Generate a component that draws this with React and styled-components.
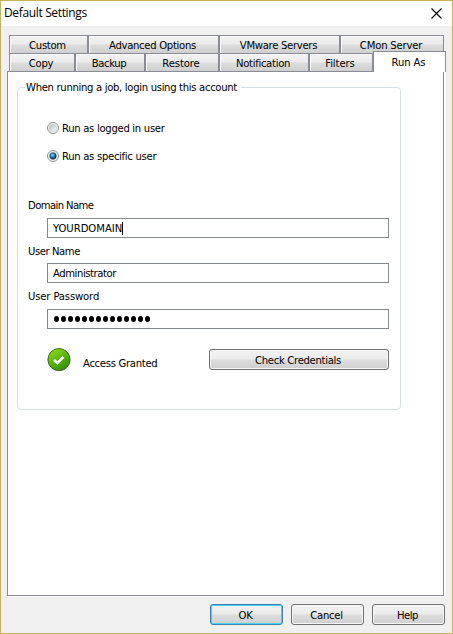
import React, { useState } from 'react';
import styled, { createGlobalStyle, css } from 'styled-components';

const GlobalStyle = createGlobalStyle`
  * {
    box-sizing: border-box;
  }

  body {
    margin: 0;
    overflow: hidden;
  }
`;

const Window = styled.div`
  display: flex;
  flex-direction: column;
  width: 453px;
  height: 634px;
  border: 1px solid #c6b15a;
  background-color: #f0f0f0;
  color: #000000;
  font-family: 'DejaVu Sans Condensed', 'DejaVu Sans', sans-serif;
  font-stretch: condensed;
  font-size: 11.2px;
  line-height: 16px;
  white-space: nowrap;
`;

const TitleBar = styled.header`
  display: flex;
  justify-content: space-between;
  height: 25px;
  padding: 4px 10px 0 3px;
  background-color: #ffffff;
  font-family: 'Open Sans', sans-serif;
  font-stretch: normal;
  font-size: 12px;
  letter-spacing: -0.35px;
`;

const CloseIcon = styled.svg`
  width: 11px;
  height: 11px;
  margin-top: 3px;
`;

const Text = styled.span`
  display: inline-block;
  height: 16px;
  line-height: 18px;
  vertical-align: top;
  letter-spacing: ${(props) => (props.$spacing ?? -0.2) - 0.1}px;
`;

const Tabs = styled.nav`
  padding: 9px 0 0 8px;
`;

const TabRow = styled.div`
  display: flex;
  height: 18px;
`;

const Tab = styled.button`
  width: ${(props) => props.$width}px;
  height: 18px;
  padding: 1px 2px 0 0;
  border: 1px solid #898c95;
  border-bottom: none;
  background: linear-gradient(#f2f2f2, #ebebeb 48%, #dddddd 52%, #cfcfcf);
  box-shadow: inset 1px 1px 0 #fbfbfb;
  color: inherit;
  font: inherit;
  text-align: center;

  ${(props) =>
    props.$active &&
    css`
      z-index: 1;
      height: 21px;
      margin-top: -2px;
      padding-bottom: 1px;
      background: #ffffff;
      box-shadow: none;
    `}
`;

const Panel = styled.main`
  width: 439px;
  height: 526px;
  margin-left: 6px;
  border-right: 2px solid #ffffff;
  border-bottom: 1px solid #ffffff;
`;

const PanelBody = styled.div`
  width: 437px;
  height: 525px;
  padding: 7px 0 0 9px;
  border: 1px solid #898c95;
  background-color: #ffffff;
`;

const Group = styled.fieldset`
  width: 384px;
  height: 331px;
  margin: 0;
  padding: 19px 0 0 10px;
  border: 1px solid #d5dfe5;
  border-radius: 4px;

  legend {
    height: 16px;
    margin-left: -3px;
    padding: 0 4px 0 1px;
  }
`;

const RadioRow = styled.label`
  display: flex;
  align-items: center;
  gap: 3px;
  height: 28px;
  padding-left: 19px;
`;

const Field = styled.label`
  display: flex;
  flex-direction: column;
  gap: ${(props) => props.$gap}px;
  margin-bottom: 5px;
`;

const Fields = styled.div`
  padding-top: 27px;
`;

const Input = styled.div`
  display: flex;
  align-items: center;
  width: 342px;
  height: 20px;
  margin-left: 19px;
  padding-left: 5px;
  border: 1px solid #828790;
  background-color: #ffffff;
`;

const Caret = styled.span`
  width: 1px;
  height: 13px;
  background-color: #000000;
`;

const Dots = styled.div`
  display: flex;
  gap: 2px;
  padding-left: 1px;

  i {
    width: 5px;
    height: 6px;
    border-radius: 50%;
    background-color: #000000;
  }
`;

const StatusRow = styled.div`
  display: flex;
  padding: 14px 0 0 19px;

  > span {
    width: 126px;
    margin: 7px 0 0 12px;
  }
`;

const Button = styled.button`
  width: ${(props) => props.$width || 73}px;
  height: 21px;
  margin-top: ${(props) => props.$top || 0}px;
  padding: 1px 2px 0 0;
  border: 1px solid ${(props) => (props.$primary ? '#3c7fb1' : '#707070')};
  border-radius: 3px;
  background: linear-gradient(#f2f2f2, #ebebeb 48%, #dddddd 52%, #cfcfcf);
  box-shadow: inset 0 0 0 1px ${(props) => (props.$primary ? '#48d0f5' : '#f8f8f8')};
  color: inherit;
  font: inherit;
  line-height: 16px;
`;

const Footer = styled.footer`
  display: flex;
  justify-content: flex-end;
  gap: 8px;
  padding: 7px 7px 0 0;
`;

const topTabs = [
  { name: 'Custom', width: 79 },
  { name: 'Advanced Options', width: 131 },
  { name: 'VMware Servers', width: 121 },
  { name: 'CMon Server', width: 104, spacing: -0.1 },
];

const bottomTabs = [
  { name: 'Copy', width: 66, spacing: -0.1 },
  { name: 'Backup', width: 70, spacing: -0.3 },
  { name: 'Restore', width: 74, spacing: 0 },
  { name: 'Notification', width: 90 },
  { name: 'Filters', width: 64, spacing: 0 },
  { name: 'Run As', width: 73, spacing: 0 },
];

function Radio({ checked }) {
  return (
    <svg width="12" height="12" viewBox="0 0 12 12">
      <defs>
        <linearGradient id="radioFace" x1="0" y1="0" x2="1" y2="1">
          <stop offset="0.2" stopColor="#c4c8ca" />
          <stop offset="0.9" stopColor="#f6f6f6" />
        </linearGradient>
        <radialGradient id="radioDot" cx="0.4" cy="0.35" r="0.65">
          <stop offset="0" stopColor="#8fe0fa" />
          <stop offset="0.5" stopColor="#2580b4" />
          <stop offset="1" stopColor="#0b2d4c" />
        </radialGradient>
      </defs>
      <circle cx="6" cy="6" r="5.5" fill="#f8f8f8" stroke="#8e8f8f" />
      <circle cx="6" cy="6" r="3.8" fill="url(#radioFace)" stroke="#c0c4c6" strokeWidth="0.5" />
      {checked && <circle cx="6" cy="6" r="3.2" fill="url(#radioDot)" stroke="#153b5c" strokeWidth="0.6" />}
    </svg>
  );
}

function GrantedIcon() {
  return (
    <svg width="24" height="24" viewBox="0 0 24 24">
      <defs>
        <linearGradient id="granted" x1="0.15" y1="0.05" x2="0.7" y2="1">
          <stop offset="0" stopColor="#8edb18" />
          <stop offset="0.5" stopColor="#58b40c" />
          <stop offset="1" stopColor="#328c06" />
        </linearGradient>
      </defs>
      <circle cx="12" cy="11.6" r="11.1" fill="url(#granted)" stroke="#3c6b2c" />
      <path d="M7 12 L10.4 15 L16.4 8.8" fill="none" stroke="#ffffff" strokeWidth="2.6" />
    </svg>
  );
}

export default function App() {
  const [activeTab, setActiveTab] = useState('Run As');
  const [account, setAccount] = useState('specific');

  const renderTab = (tab) => (
    <Tab
      key={tab.name}
      $width={tab.width}
      $active={activeTab === tab.name}
      onClick={() => setActiveTab(tab.name)}
    >
      <Text $spacing={tab.spacing}>{tab.name}</Text>
    </Tab>
  );

  return (
    <>
      <GlobalStyle />
      <Window>
        <TitleBar>
          <span>Default Settings</span>
          <CloseIcon viewBox="0 0 11 11">
            <path d="M0.5 0.5 L10.5 10.5 M10.5 0.5 L0.5 10.5" stroke="#000000" strokeWidth="1.1" />
          </CloseIcon>
        </TitleBar>
        <Tabs>
          <TabRow>{topTabs.map(renderTab)}</TabRow>
          <TabRow>{bottomTabs.map(renderTab)}</TabRow>
        </Tabs>
        <Panel>
          <PanelBody>
            <Group>
              <legend>
                <Text $spacing={-0.22}>When running a job, login using this account</Text>
              </legend>
              <RadioRow onClick={() => setAccount('loggedIn')}>
                <Radio checked={account === 'loggedIn'} />
                <Text>Run as logged in user</Text>
              </RadioRow>
              <RadioRow onClick={() => setAccount('specific')}>
                <Radio checked={account === 'specific'} />
                <Text $spacing={-0.2}>Run as specific user</Text>
              </RadioRow>
              <Fields>
                <Field $gap={5}>
                  <Text $spacing={-0.5}>Domain Name</Text>
                  <Input>
                    <Text $spacing={0.06}>YOURDOMAIN</Text>
                    <Caret />
                  </Input>
                </Field>
                <Field $gap={4}>
                  <Text $spacing={-0.33}>User Name</Text>
                  <Input>
                    <Text $spacing={-0.33}>Administrator</Text>
                  </Input>
                </Field>
                <Field $gap={5}>
                  <Text $spacing={-0.05}>User Password</Text>
                  <Input>
                    <Dots>
                      {Array.from({ length: 14 }, (_, i) => (
                        <i key={i} />
                      ))}
                    </Dots>
                  </Input>
                </Field>
              </Fields>
              <StatusRow>
                <GrantedIcon />
                <Text>Access Granted</Text>
                <Button $width={180} $top={1}>
                  <Text>Check Credentials</Text>
                </Button>
              </StatusRow>
            </Group>
          </PanelBody>
        </Panel>
        <Footer>
          <Button $primary>
            <Text>OK</Text>
          </Button>
          <Button>
            <Text>Cancel</Text>
          </Button>
          <Button>
            <Text $spacing={-0.4}>Help</Text>
          </Button>
        </Footer>
      </Window>
    </>
  );
}
